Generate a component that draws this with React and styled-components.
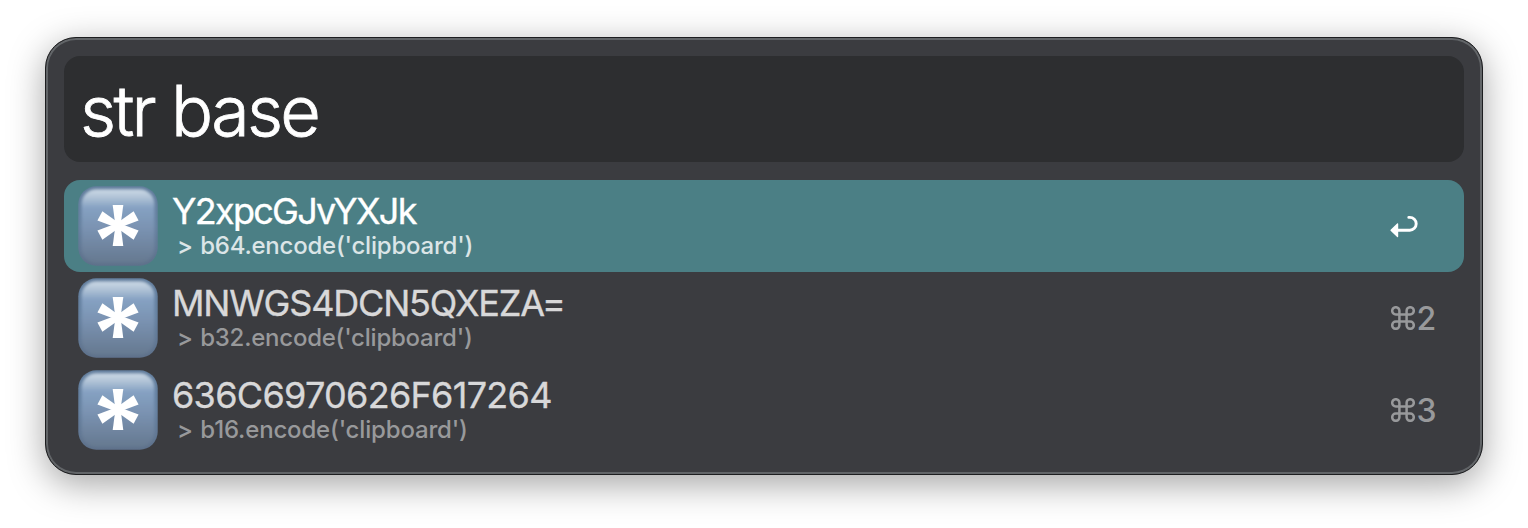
import React from "react";
import styled, { createGlobalStyle } from "styled-components";

const GlobalStyle = createGlobalStyle`
  * { box-sizing: border-box; }
  body { margin: 0; background: #fff; overflow: hidden; }
`;

const Desktop = styled.main`
  height: 528px;
  padding: 37px 45px 53px;
  background: #fff;
  font-family: Inter, "Liberation Sans", sans-serif;
`;

const Panel = styled.section`
  height: 438px;
  padding: 18px;
  border: 1px solid #1d1e20;
  border-radius: 31px;
  background: #3b3c40;
  box-shadow: inset 0 0 0 2px #626568, 0 9px 36px rgba(0, 0, 0, 0.36);
`;

const SearchField = styled.div`
  display: flex;
  align-items: center;
  height: 106px;
  padding: 3px 16px 0;
  margin-bottom: 18px;
  border-radius: 16px;
  background: #2d2e30;
  color: #fff;
  font-size: 70px;
  font-weight: 300;
  letter-spacing: -2.7px;
  -webkit-text-stroke: 0.8px #fff;
  white-space: pre;
`;

const Row = styled.div`
  display: flex;
  align-items: center;
  height: 92px;
  padding: 0 28px 0 14px;
  border-radius: 16px;
  background: ${(p) => (p.$selected ? "#4b7f85" : "transparent")};
`;

const Labels = styled.div`
  flex: 1;
  margin-left: 14px;
  padding-bottom: 2px;
`;

const Title = styled.div`
  height: 42px;
  line-height: 42px;
  font-size: 36px;
  font-weight: 400;
  -webkit-text-stroke: 0.35px currentColor;
  letter-spacing: ${(p) => p.$tracking}px;
  color: ${(p) => (p.$selected ? "#fff" : "#d8d8d9")};
`;

const Subtitle = styled.div`
  height: 28px;
  padding-left: 5px;
  line-height: 28px;
  font-size: 24px;
  font-weight: 500;
  word-spacing: 1.2px;
  letter-spacing: ${(p) => p.$tracking}px;
  color: ${(p) => (p.$selected ? "#dbe5e7" : "#98999b")};
`;

const Shortcut = styled.div`
  display: flex;
  align-items: center;
  width: 46px;
  font-size: 32px;
  font-weight: 500;
  letter-spacing: -0.5px;
  color: #98999b;
`;

const CommandGlyph = styled.svg`
  flex: none;
  width: 24px;
  height: 24px;
  margin: 0 2px 0 0.5px;
`;

const KeycapSvg = styled.svg`
  flex: none;
  width: 80px;
  height: 80px;
`;

function Keycap({ id }) {
  return (
    <KeycapSvg viewBox="0 0 80 80">
      <defs>
        <linearGradient id={`${id}-edge`} x2="0" y2="1">
          <stop offset="0" stopColor="#5f7b9b" />
          <stop offset="0.5" stopColor="#65809f" />
          <stop offset="1" stopColor="#5d708a" />
        </linearGradient>
        <linearGradient id={`${id}-face`} x2="0" y2="1">
          <stop offset="0" stopColor="#ccd9e6" />
          <stop offset="0.1" stopColor="#b3c5d8" />
          <stop offset="0.25" stopColor="#85a1c2" />
          <stop offset="0.55" stopColor="#7991b0" />
          <stop offset="1" stopColor="#65788f" />
        </linearGradient>
        <filter id={`${id}-soft`}>
          <feGaussianBlur stdDeviation="1.4" />
        </filter>
      </defs>
      <rect x="0.3" y="0.3" width="79.4" height="79.4" rx="18" fill={`url(#${id}-edge)`} />
      <rect x="3.5" y="3.2" width="73" height="74" rx="15" fill={`url(#${id}-face)`} filter={`url(#${id}-soft)`} />
      <g transform="translate(40 39.5)" fill="#fff">
        {[0, 62, 118, 180, 242, 298].map((a) => (
          <polygon key={a} points="-2.6,0 -5.3,-20.5 5.3,-20.5 2.6,0" transform={`rotate(${a})`} />
        ))}
      </g>
    </KeycapSvg>
  );
}

const ReturnSvg = styled.svg`
  width: 29px;
  height: 24px;
`;

function ReturnArrow() {
  return (
    <ReturnSvg viewBox="0 0 29 24">
      <path d="M18.8 3.4h1a6.4 6.4 0 0 1 0 12.8H7" fill="none" stroke="#fff" strokeWidth="2.9" strokeLinecap="round" />
      <path d="M.6 15.7 7.1 9.4c.5-.4 1.1-.2 1.1.5v12.6c0 .8-.6 1-1.1.5L.6 16.7c-.3-.3-.3-.7 0-1Z" fill="#fff" />
    </ReturnSvg>
  );
}

function Command() {
  return (
    <CommandGlyph viewBox="0 0 24 24" fill="none" stroke="#98999b" strokeWidth="2.5">
      <path d="M8.4 8.4V4.8a3.6 3.6 0 1 0-3.6 3.6h14.4a3.6 3.6 0 1 0-3.6-3.6v14.4a3.6 3.6 0 1 0 3.6-3.6H4.8a3.6 3.6 0 1 0 3.6 3.6V8.4" />
    </CommandGlyph>
  );
}

const results = [
  { title: "Y2xpcGJvYXJk", sub: "> b64.encode('clipboard')", tt: -1.72, st: -0.22 },
  { title: "MNWGS4DCN5QXEZA=", sub: "> b32.encode('clipboard')", tt: -1.18, st: -0.23, key: "2" },
  { title: "636C6970626F617264", sub: "> b16.encode('clipboard')", tt: -0.7, st: -0.17, key: "3" },
];

export default function App() {
  return (
    <Desktop>
      <GlobalStyle />
      <Panel>
        <SearchField>str base</SearchField>
        {results.map((r, i) => (
          <Row key={r.title} $selected={!r.key}>
            <Keycap id={`key${i}`} />
            <Labels>
              <Title $selected={!r.key} $tracking={r.tt}>{r.title}</Title>
              <Subtitle $selected={!r.key} $tracking={r.st}>{r.sub}</Subtitle>
            </Labels>
            <Shortcut>
              {r.key ? <><Command />{r.key}</> : <ReturnArrow />}
            </Shortcut>
          </Row>
        ))}
      </Panel>
    </Desktop>
  );
}
